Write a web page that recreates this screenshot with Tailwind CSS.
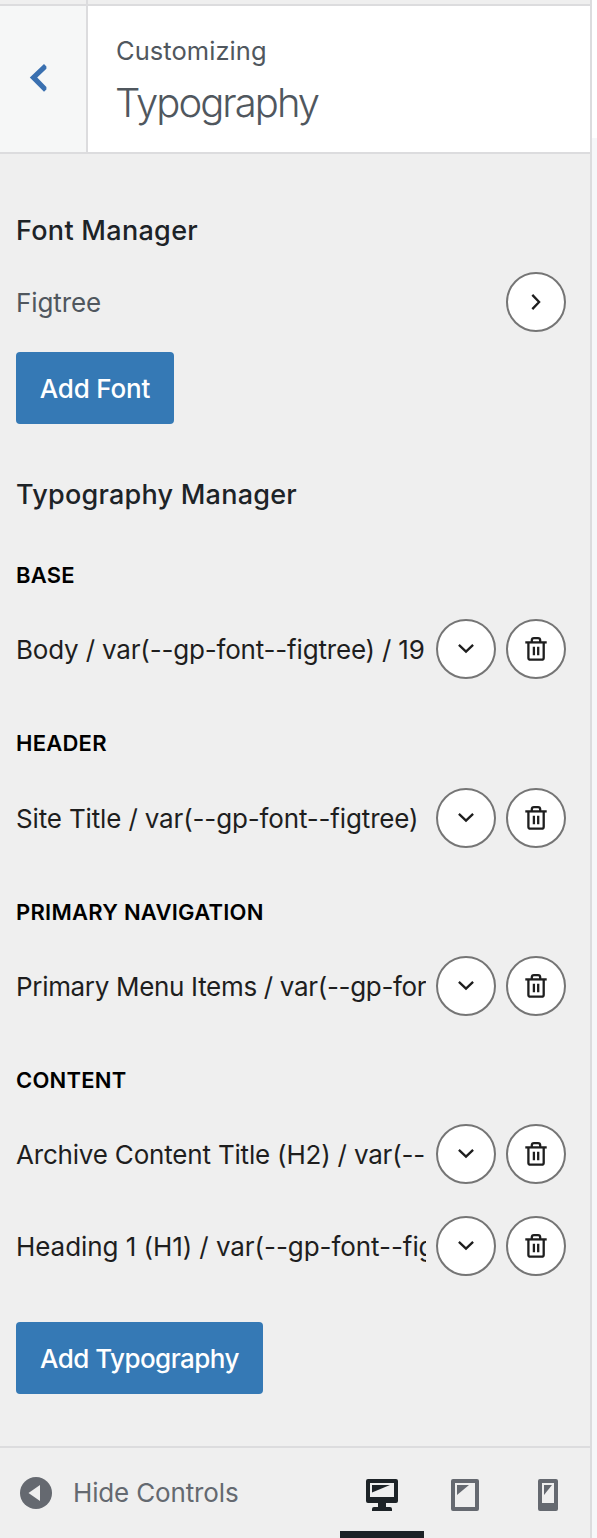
<!DOCTYPE html>
<html lang="en">
<head>
  <meta charset="UTF-8">
  <meta name="viewport" content="width=device-width, initial-scale=1.0">
  <title>Customizing - Typography</title>
  <script src="https://cdn.jsdelivr.net/npm/@tailwindcss/browser@4"></script>
</head>
<body class="flex h-[1538px] overflow-hidden bg-[#f6f7f9] font-['Inter','Liberation_Sans',sans-serif] text-[26px]">
  <svg class="hidden">
    <symbol id="chevron-down" viewBox="0 0 60 60">
      <path d="M22.9 25.9 30 32.7l7.1-6.8" fill="none" stroke="#1e1e1e" stroke-width="2.3" />
    </symbol>
    <symbol id="trash" viewBox="0 0 60 60">
      <g fill="none" stroke="#1e1e1e" stroke-width="2.3">
        <path d="M19.3 23.4h21.4" />
        <path d="M25.8 23.3v-2a2.2 2.2 0 0 1 2.2-2.2h4a2.2 2.2 0 0 1 2.2 2.2v2" />
        <path d="M22.4 23.5v15.2a2 2 0 0 0 2 2h11.3a2 2 0 0 0 2-2V23.5" />
        <path d="M27.9 27.8v8.4M32.2 27.8v8.4" />
      </g>
    </symbol>
  </svg>

  <div class="flex w-[592px] shrink-0 flex-col border-r-2 border-[#dcdcde] bg-[#efefef]">
    <div class="flex h-1"><div class="w-[88px] border-r-2 border-[#dcdcde]"></div></div>
    <header class="flex h-[150px] border-y-2 border-[#dcdcde] bg-white text-[#50575e]">
      <button class="flex w-[88px] items-center border-r-2 border-[#dcdcde] bg-[#f6f7f7] pl-[29px]">
        <svg class="-mt-0.5 h-8 w-5" viewBox="0 0 20 32"><path d="M15 2 .8 15.6 15 29.8l2.4-2.4V25L8.2 15.6l9.2-8.8V4.4z" fill="#3a70b0" /></svg>
      </button>
      <div class="pl-[28px] pt-[29px]">
        <div class="h-8 text-[25.5px] leading-8 tracking-[0.05px]">Customizing</div>
        <h1 class="-ml-px mt-[12px] text-[40px] font-light leading-[48px] tracking-[-1.95px]">Typography</h1>
      </div>
    </header>

    <main class="flex-1 pl-4 pr-6 pt-[61px] text-[#1e1e1e]">
      <h2 class="h-8 text-[27px] font-medium leading-8 tracking-[0.3px] text-[#1d2327]">Font Manager</h2>
      <div class="mt-[25px] flex items-center justify-between">
        <span class="tracking-[-0.1px] text-[#50575e]">Figtree</span>
        <button class="size-[60px] rounded-full border-2 border-[#757575] bg-white">
          <svg class="-m-0.5 size-[60px]" viewBox="0 0 60 60"><path d="M26.3 22.9l6.8 7.1-6.8 7.1" fill="none" stroke="#1e1e1e" stroke-width="2.3" /></svg>
        </button>
      </div>
      <button class="mt-5 h-[72px] w-[158px] rounded bg-[#3579b5] font-medium tracking-[-0.2px] text-white">Add Font</button>

      <h2 class="mt-[55px] h-8 text-[27px] font-medium leading-8 tracking-[0.24px] text-[#1d2327]">Typography Manager</h2>

      <h3 class="mt-[50px] h-7 text-[22px] font-semibold leading-7 tracking-[0.25px] text-black">BASE</h3>
      <div class="mt-[30px] flex items-center gap-[10px]">
        <span class="w-[410px] overflow-hidden whitespace-nowrap tracking-[-0.18px]">Body / var(--gp-font--figtree) / 19</span>
        <button class="size-[60px] shrink-0 rounded-full border-2 border-[#757575] bg-white"><svg class="-m-0.5 size-[60px]"><use href="#chevron-down" /></svg></button>
        <button class="size-[60px] shrink-0 rounded-full border-2 border-[#757575] bg-white"><svg class="-m-0.5 size-[60px]"><use href="#trash" /></svg></button>
      </div>

      <h3 class="mt-[50px] h-7 text-[22px] font-semibold leading-7 tracking-[0.25px] text-black">HEADER</h3>
      <div class="mt-[31px] flex items-center gap-[10px]">
        <span class="w-[410px] overflow-hidden whitespace-nowrap tracking-[-0.15px]">Site Title / var(--gp-font--figtree)</span>
        <button class="size-[60px] shrink-0 rounded-full border-2 border-[#757575] bg-white"><svg class="-m-0.5 size-[60px]"><use href="#chevron-down" /></svg></button>
        <button class="size-[60px] shrink-0 rounded-full border-2 border-[#757575] bg-white"><svg class="-m-0.5 size-[60px]"><use href="#trash" /></svg></button>
      </div>

      <h3 class="mt-[50px] h-7 text-[22px] font-semibold leading-7 tracking-[0.25px] text-black">PRIMARY NAVIGATION</h3>
      <div class="mt-[30px] flex items-center gap-[10px]">
        <span class="w-[410px] overflow-hidden whitespace-nowrap tracking-[-0.32px]">Primary Menu Items / var(--gp-for</span>
        <button class="size-[60px] shrink-0 rounded-full border-2 border-[#757575] bg-white"><svg class="-m-0.5 size-[60px]"><use href="#chevron-down" /></svg></button>
        <button class="size-[60px] shrink-0 rounded-full border-2 border-[#757575] bg-white"><svg class="-m-0.5 size-[60px]"><use href="#trash" /></svg></button>
      </div>

      <h3 class="mt-[50px] h-7 text-[22px] font-semibold leading-7 tracking-[0.22px] text-black">CONTENT</h3>
      <div class="mt-[30px] flex items-center gap-[10px]">
        <span class="w-[410px] overflow-hidden whitespace-nowrap tracking-[-0.19px]">Archive Content Title (H2) / var(--</span>
        <button class="size-[60px] shrink-0 rounded-full border-2 border-[#757575] bg-white"><svg class="-m-0.5 size-[60px]"><use href="#chevron-down" /></svg></button>
        <button class="size-[60px] shrink-0 rounded-full border-2 border-[#757575] bg-white"><svg class="-m-0.5 size-[60px]"><use href="#trash" /></svg></button>
      </div>
      <div class="mt-8 flex items-center gap-[10px]">
        <span class="w-[410px] overflow-hidden whitespace-nowrap tracking-[-0.06px]">Heading 1 (H1) / var(--gp-font--fig</span>
        <button class="size-[60px] shrink-0 rounded-full border-2 border-[#757575] bg-white"><svg class="-m-0.5 size-[60px]"><use href="#chevron-down" /></svg></button>
        <button class="size-[60px] shrink-0 rounded-full border-2 border-[#757575] bg-white"><svg class="-m-0.5 size-[60px]"><use href="#trash" /></svg></button>
      </div>

      <button class="mt-[46px] h-[72px] w-[247px] rounded bg-[#3579b5] font-medium tracking-[-0.55px] text-white">Add Typography</button>
    </main>

    <footer class="flex h-[92px] border-t-2 border-[#dcdcde] text-[#646970]">
      <button class="flex w-[340px] items-center gap-[21px] pl-5">
        <svg class="size-8" viewBox="0 0 32 32"><circle cx="16" cy="16" r="16" fill="#656970" /><path d="M20 8v16L8.5 16z" fill="#efefef" /></svg>
        <span class="-mt-px tracking-[-0.15px]">Hide Controls</span>
      </button>
      <button class="flex w-[84px] justify-center border-b-[7px] border-[#1d2327] pt-[31px]">
        <svg class="h-8 w-8" viewBox="0 0 32 32" fill="#1d2327">
          <path fill-rule="evenodd" d="M2 0h28a2 2 0 0 1 2 2v20a2 2 0 0 1-2 2H20v4h4q2 0 2 2v2H6v-2q0-2 2-2h4v-4H2a2 2 0 0 1-2-2V2a2 2 0 0 1 2-2zM4 4v14h24V4z" />
          <path d="M6 6h18L6 13.5z" />
        </svg>
      </button>
      <button class="flex w-[82px] justify-center pt-[31px]">
        <svg class="h-8 w-7" viewBox="0 0 28 32" fill="#656970">
          <path fill-rule="evenodd" d="M2 0h24a2 2 0 0 1 2 2v28a2 2 0 0 1-2 2H2a2 2 0 0 1-2-2V2a2 2 0 0 1 2-2zM4 4v24h20V4z" />
          <path d="M6 6h12L6 16z" />
        </svg>
      </button>
      <button class="flex w-[84px] justify-center pt-[31px]">
        <svg class="h-8 w-5" viewBox="0 0 20 32" fill="#656970">
          <path fill-rule="evenodd" d="M2 0h16a2 2 0 0 1 2 2v28a2 2 0 0 1-2 2H2a2 2 0 0 1-2-2V2a2 2 0 0 1 2-2zM4 4v20h12V4z" />
          <path d="M6 6h8L6 16z" />
        </svg>
      </button>
    </footer>
  </div>
  <div class="h-[138px] flex-1 bg-white"></div>
</body>
</html>
